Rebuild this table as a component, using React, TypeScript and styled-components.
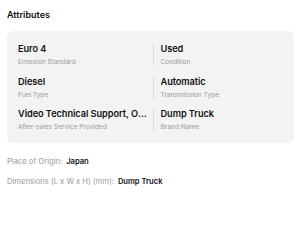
import React from "react";
import styled, { createGlobalStyle } from "styled-components";

const Global = createGlobalStyle`
  html, body { margin: 0; padding: 0; background: #fff; }
  body { font-family: Inter, "Noto Sans", sans-serif; color: #111; }
`;

const Page = styled.div`
  padding: 9px 7px 0 7px;
`;

const Title = styled.h2`
  margin: 0;
  font-size: 9px;
  line-height: 12px;
  font-weight: 600;
  color: #111;
`;

const Card = styled.div`
  margin-top: 10px;
  width: 287px;
  box-sizing: border-box;
  background: #f3f3f3;
  border-radius: 6px;
  padding: 12px 11px 12px 11px;
  display: grid;
  grid-template-columns: 1fr 1fr;
  column-gap: 4px;
  row-gap: 9.5px;
`;

const Cell = styled.div<{ $right?: boolean }>`
  min-width: 0;
  padding-left: ${(p) => (p.$right ? "7px" : "0")};
  padding-right: 1px;
  border-left: ${(p) => (p.$right ? "1px solid #dcdcdc" : "none")};
  display: flex;
  flex-direction: column;
  gap: 3px;
`;

const Value = styled.div`
  font-size: 9.2px;
  line-height: 12px;
  font-weight: 600;
  letter-spacing: -0.05px;
  white-space: nowrap;
  overflow: hidden;
  text-overflow: ellipsis;
`;

const Label = styled.div`
  font-size: 6.6px;
  line-height: 8px;
  color: #9a9a9a;
`;

const Details = styled.div`
  margin-top: 12.5px;
  display: flex;
  flex-direction: column;
  gap: 9px;
`;

const Line = styled.div`
  font-size: 7.6px;
  line-height: 11px;
  display: flex;
  gap: 4px;
`;

const Key = styled.span`
  color: #9a9a9a;
`;

const Val = styled.span`
  color: #111;
  font-weight: 600;
`;

const attrs = [
  ["Euro 4", "Emission Standard", "Used", "Condition"],
  ["Diesel", "Fuel Type", "Automatic", "Transmission Type"],
  ["Video Technical Support, Online Support", "After-sales Service Provided", "Dump Truck", "Brand Name"],
];

export default function App() {
  return (
    <>
      <Global />
      <Page>
        <Title>Attributes</Title>
        <Card>
          {attrs.map(([v1, l1, v2, l2]) => (
            <React.Fragment key={l1}>
              <Cell>
                <Value>{v1}</Value>
                <Label>{l1}</Label>
              </Cell>
              <Cell $right>
                <Value>{v2}</Value>
                <Label>{l2}</Label>
              </Cell>
            </React.Fragment>
          ))}
        </Card>
        <Details>
          <Line>
            <Key>Place of Origin:</Key>
            <Val>Japan</Val>
          </Line>
          <Line>
            <Key>Dimensions (L x W x H) (mm):</Key>
            <Val>Dump Truck</Val>
          </Line>
        </Details>
      </Page>
    </>
  );
}
